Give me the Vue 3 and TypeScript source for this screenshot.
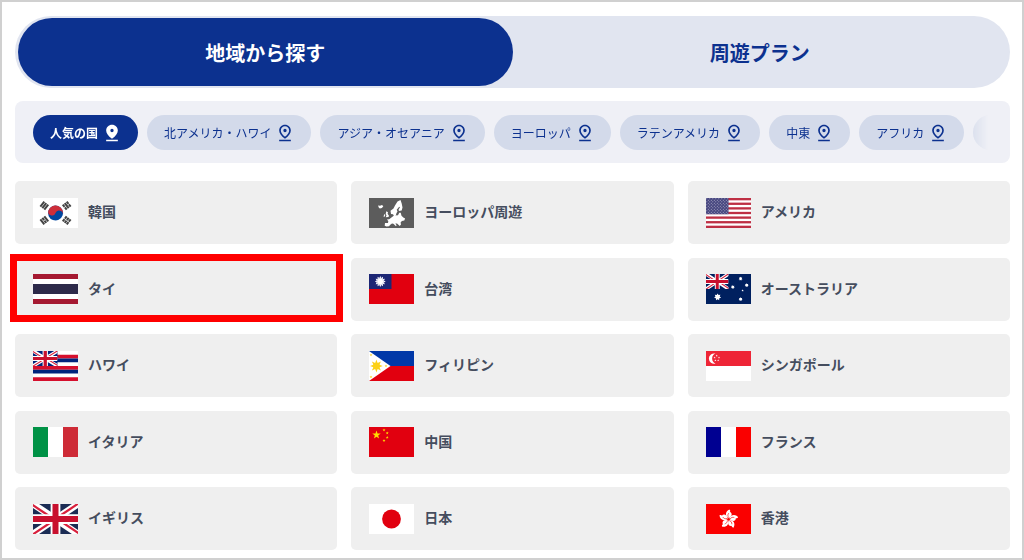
<script setup lang="ts">
import { ref } from 'vue'

interface Country {
  code: string
  name: string
}

const activeTab = ref<number>(0)
const activeRegion = ref<number>(0)
const tabs: string[] = ['地域から探す', '周遊プラン']
const regions: string[] = [
  '人気の国',
  '北アメリカ・ハワイ',
  'アジア・オセアニア',
  'ヨーロッパ',
  'ラテンアメリカ',
  '中東',
  'アフリカ',
]
const highlighted = 'th'

const countries: Country[] = [
  { code: 'kr', name: '韓国' },
  { code: 'eu', name: 'ヨーロッパ周遊' },
  { code: 'us', name: 'アメリカ' },
  { code: 'th', name: 'タイ' },
  { code: 'tw', name: '台湾' },
  { code: 'au', name: 'オーストラリア' },
  { code: 'hawaii', name: 'ハワイ' },
  { code: 'ph', name: 'フィリピン' },
  { code: 'sg', name: 'シンガポール' },
  { code: 'it', name: 'イタリア' },
  { code: 'cn', name: '中国' },
  { code: 'fr', name: 'フランス' },
  { code: 'gb', name: 'イギリス' },
  { code: 'jp', name: '日本' },
  { code: 'hk', name: '香港' },
]

function star(cx: number, cy: number, r: number, points = 5, inner = 0.4): string {
  const out: string[] = []
  for (let i = 0; i < points * 2; i++) {
    const radius = i % 2 === 0 ? r : r * inner
    const a = (Math.PI * i) / points - Math.PI / 2
    out.push(`${(cx + radius * Math.cos(a)).toFixed(2)},${(cy + radius * Math.sin(a)).toFixed(2)}`)
  }
  return out.join(' ')
}
</script>

<template>
  <svg class="defs" width="0" height="0" aria-hidden="true">
    <defs>
      <symbol id="union" viewBox="0 0 60 40" preserveAspectRatio="none">
        <path d="M0 0L60 40M60 0L0 40" stroke="#fff" stroke-width="9" />
        <path d="M-1 1L29 21M31 19L61 39M61 -1L31 19M29 21L-1 41" stroke="#d8203c" stroke-width="3" />
        <path d="M30 0V40M0 20H60" stroke="#fff" stroke-width="13" />
        <path d="M30 0V40M0 20H60" stroke="#c8102e" stroke-width="8" />
      </symbol>
      <pattern id="us-stars" width="3" height="3" patternUnits="userSpaceOnUse">
        <circle cx=".8" cy=".8" r=".5" fill="#b9b7d0" />
        <circle cx="2.3" cy="2.3" r=".5" fill="#b9b7d0" />
      </pattern>
    </defs>
  </svg>

  <main class="page">
    <div class="tabs" role="tablist">
      <button
        v-for="(tab, i) in tabs"
        :key="tab"
        type="button"
        role="tab"
        class="tab"
        :class="{ active: activeTab === i }"
        :aria-selected="activeTab === i"
        @click="activeTab = i"
      >{{ tab }}</button>
    </div>

    <nav class="regions">
      <div class="strip">
        <button
          v-for="(region, i) in regions"
          :key="region"
          type="button"
          class="chip"
          :class="{ active: activeRegion === i }"
          @click="activeRegion = i"
        >
          <span>{{ region }}</span>
          <svg class="pin" viewBox="0 0 24 24" aria-hidden="true">
            <path
              v-if="activeRegion === i"
              fill="currentColor"
              fill-rule="evenodd"
              d="M12 2C8.1 2 5 5 5 9c0 3.2 2.3 6.6 7 10 4.7-3.4 7-6.8 7-10 0-4-3.1-7-7-7zm0 5a2 2 0 1 1 0 4 2 2 0 0 1 0-4zM5 20h14v2H5z"
            />
            <path
              v-else
              fill="currentColor"
              fill-rule="evenodd"
              d="M12 2C8.1 2 5 5 5 9c0 3.2 2.3 6.6 7 10 4.7-3.4 7-6.8 7-10 0-4-3.1-7-7-7zm0 2c2.8 0 5 2.2 5 5 0 2.4-1.7 4.9-5 7.5C8.7 13.9 7 11.4 7 9c0-2.8 2.2-5 5-5zm0 3a2 2 0 1 1 0 4 2 2 0 0 1 0-4zM5 20h14v2H5z"
            />
          </svg>
        </button>
        <span class="chip more" aria-hidden="true"></span>
      </div>
    </nav>

    <div class="grid">
      <a
        v-for="c in countries"
        :key="c.code"
        href="#"
        class="card"
        :class="{ highlight: c.code === highlighted }"
        @click.prevent
      >
        <svg class="flag" viewBox="0 0 45 30" aria-hidden="true">
          <g v-if="c.code === 'kr'">
            <path fill="#fff" d="M0 0h45v30H0z" />
            <g transform="rotate(20 22.5 15)">
              <circle cx="22.5" cy="15" r="7.5" fill="#0047a0" />
              <path fill="#cd2e3a" d="M15 15a7.500 7.500 0 0 1 15 0 3.750 3.750 0 0 0-7.500 0 3.750 3.750 0 0 1-7.500 0z" />
            </g>
            <g stroke="#444" stroke-width="2">
              <path transform="translate(11.3 7.6) rotate(-52)" d="M-3.200-2.500h6.400M-3.200 0h6.400M-3.200 2.500h6.400" />
              <path transform="translate(33.7 7.6) rotate(52)" d="M-3.200-2.500h2.900M.3-2.500h2.900M-3.200 0h6.400M-3.200 2.500h2.900M.3 2.500h2.900" />
              <path transform="translate(11.3 22.4) rotate(52)" d="M-3.200-2.500h6.400M-3.200 0h2.900M.3 0h2.900M-3.200 2.500h6.400" />
              <path transform="translate(33.7 22.4) rotate(-52)" d="M-3.200-2.500h2.900M.3-2.500h2.900M-3.200 0h2.900M.3 0h2.900M-3.200 2.500h2.900M.3 2.500h2.900" />
            </g>
          </g>
          <g v-else-if="c.code === 'eu'">
            <path fill="#5c5c5c" d="M0 0h45v30H0z" />
            <g fill="#fff">
              <path d="M9 7.500l2 .3 2-.7 1.300 1.200-1.400 1.700-2 .5-1-.8z" />
              <path d="M31.500 2l-3 1.400-2.500 4-1.500 3-3 2.300.5 3.200 2 .3 1.200 2 1.600-.6.7-2.600 1-1.500-.8-1.700 2.500-3 .8.500-1.400 2.200.3 1.500 2.800-.4.800-3-.8-4z" />
              <path d="M17.300 13.300l1.700 1-.4 1.500 1.500 2.200-.8 1-2.500.2.700-2-.8-1.200zM15.200 16.200l1 .4-.2 1.900-1.500.3z" />
              <path d="M25 17.500l4-.3 1.200-2.500 1.500.1.800 3 1.800 1.700 1.800 1-.8 2-2.400.5-1.300 1.400.4 2-1.300 1.500-1.300-1.200-1.400-1.300-1.700.2 1.300 1.700-.6 1-2.600-2.500-1.400-.4-1.700 1.300-1.300 1.500-2.500.3-1.800-.8.300-2.600 3-.2.300-2-1.400-1.400 2.300-.3z" />
            </g>
          </g>
          <g v-else-if="c.code === 'us'">
            <path fill="#fff" d="M0 0h45v30H0z" />
            <rect v-for="i in 7" :key="i" width="45" :height="30 / 13" :y="((i - 1) * 60) / 13" fill="#be2f44" />
            <path fill="#46467f" d="M0 0h22.500v16.200H0z" />
            <path fill="url(#us-stars)" d="M0 0h22.500v16.200H0z" />
          </g>
          <g v-else-if="c.code === 'th'">
            <path fill="#a51931" d="M0 0h45v30H0z" />
            <path fill="#fff" d="M0 5h45v20H0z" />
            <path fill="#2d2a4a" d="M0 10h45v10H0z" />
          </g>
          <g v-else-if="c.code === 'tw'">
            <path fill="#e1000f" d="M0 0h45v30H0z" />
            <path fill="#1c2674" d="M0 0h22.500v15H0z" />
            <polygon :points="star(11.3, 7.5, 5.4, 12, 0.68)" fill="#fff" />
            <circle cx="11.3" cy="7.5" r="3.3" fill="none" stroke="#a8add0" stroke-width=".5" />
          </g>
          <g v-else-if="c.code === 'au'">
            <path fill="#00205f" d="M0 0h45v30H0z" />
            <use href="#union" width="22.5" height="15" />
            <g fill="#fff">
              <polygon :points="star(11.6, 23, 3.6, 7, 0.6)" />
              <polygon :points="star(34.6, 4.7, 2, 7, 0.6)" />
              <polygon :points="star(40.7, 11.2, 2, 7, 0.6)" />
              <polygon :points="star(26.8, 13, 2, 7, 0.6)" />
              <polygon :points="star(36.6, 16.5, 1.2)" />
              <polygon :points="star(34.6, 25.2, 2, 7, 0.6)" />
            </g>
          </g>
          <g v-else-if="c.code === 'hawaii'">
            <path fill="#fff" d="M0 0h45v30H0z" />
            <path fill="#d50f2d" d="M0 3.750h45V7.500H0zM0 15h45v3.750H0zM0 26.250h45V30H0z" />
            <path fill="#00247d" d="M0 7.500h45v3.750H0zM0 18.750h45v3.750H0zM0 0h24.500v15H0z" />
            <use href="#union" width="24.5" height="15" />
          </g>
          <g v-else-if="c.code === 'ph'">
            <path fill="#0038a8" d="M0 0h45v15H0z" />
            <path fill="#e1000f" d="M0 15h45v15H0z" />
            <path fill="#fff" d="M0 0l21.500 15L0 30z" />
            <g fill="#fcd116">
              <polygon :points="star(7.4, 15, 6.4, 8, 0.5)" />
              <circle cx="7.4" cy="15" r="3.3" />
              <polygon :points="star(2, 4, 1.5)" />
              <polygon :points="star(2, 26, 1.5)" />
              <polygon :points="star(17, 15, 1.5)" />
            </g>
          </g>
          <g v-else-if="c.code === 'sg'">
            <path fill="#fff" d="M0 0h45v30H0z" />
            <path fill="#ee2536" d="M0 0h45v15H0z" />
            <path fill="#fff" d="M9.500 2.600a5.200 5.200 0 1 0 0 10 5.400 5.400 0 0 1 0-10z" />
            <g fill="#fff">
              <polygon :points="star(10.7, 4.7, 1.1)" />
              <polygon :points="star(8.6, 6.5, 1.1)" />
              <polygon :points="star(13, 6.5, 1.1)" />
              <polygon :points="star(9.4, 9.4, 1.1)" />
              <polygon :points="star(12.2, 9.4, 1.1)" />
            </g>
          </g>
          <g v-else-if="c.code === 'it'">
            <path fill="#fff" d="M0 0h45v30H0z" />
            <path fill="#009246" d="M0 0h15v30H0z" />
            <path fill="#ce2b37" d="M30 0h15v30H30z" />
          </g>
          <g v-else-if="c.code === 'cn'">
            <path fill="#e1000f" d="M0 0h45v30H0z" />
            <g fill="#ffde00">
              <polygon :points="star(7.5, 7.9, 4.4)" />
              <polygon :points="star(15, 3, 1.6)" />
              <polygon :points="star(18.2, 6, 1.6)" />
              <polygon :points="star(18.2, 10.4, 1.6)" />
              <polygon :points="star(15, 13.5, 1.6)" />
            </g>
          </g>
          <g v-else-if="c.code === 'fr'">
            <path fill="#fff" d="M0 0h45v30H0z" />
            <path fill="#000091" d="M0 0h15v30H0z" />
            <path fill="#fa0000" d="M30 0h15v30H30z" />
          </g>
          <g v-else-if="c.code === 'gb'">
            <path fill="#1b2c54" d="M0 0h45v30H0z" />
            <use href="#union" width="45" height="30" />
          </g>
          <g v-else-if="c.code === 'jp'">
            <path fill="#fff" d="M0 0h45v30H0z" />
            <circle cx="22.5" cy="15" r="9.4" fill="#e1000f" />
          </g>
          <g v-else>
            <path fill="#fa0000" d="M0 0h45v30H0z" />
            <g v-for="i in 5" :key="i" :transform="`translate(22.5 15.2) rotate(${i * 72 + 10})`">
              <path fill="#fff" d="M0-1C-4.400-2.500-4.600-7.500-.8-9.800c1.400.8 1.200 1.800.8 2.400C2.600-7.300 3.600-3.500 0-1z" />
              <path fill="none" stroke="#fa0000" stroke-width=".6" d="M0-1.500C-1.500-3-1.600-4.500-.8-6" />
            </g>
          </g>
        </svg>
        <span class="name">{{ c.name }}</span>
      </a>
    </div>
  </main>
</template>

<style>
body {
  background: #fff;
}
</style>

<style scoped>
.defs {
  position: absolute;
}
.page {
  box-sizing: border-box;
  min-height: 100vh;
  display: flex;
  flex-direction: column;
  padding: 14px 12px 8px 13px;
  border: 2px solid #d0d0d0;
  background: #fff;
  font-family: "Noto Sans CJK JP", "Noto Sans", sans-serif;
}
button {
  margin: 0;
  border: 0;
  font-family: inherit;
  cursor: pointer;
}
.tabs {
  display: grid;
  grid-template-columns: 1fr 1fr;
  padding: 2px 3px;
  border-radius: 36px;
  background: #e1e5f0;
}
.tab {
  height: 68px;
  padding: 0;
  border-radius: 34px;
  background: transparent;
  color: #0c318f;
  font-size: 20px;
  font-weight: 700;
}
.tab.active {
  background: #0c318f;
  color: #fff;
}
.regions {
  margin-top: 13px;
  padding: 14px 18px 13px;
  border-radius: 8px;
  background: #eff0f6;
}
.strip {
  display: flex;
  gap: 9px;
  overflow: hidden;
  mask-image: linear-gradient(to left, transparent 4px, #000 26px);
}
.chip {
  display: flex;
  flex: none;
  align-items: center;
  gap: 4px;
  height: 35px;
  padding: 0 16px 0 17px;
  border-radius: 18px;
  background: #d3daea;
  color: #0c318f;
  font-size: 12px;
  line-height: 18px;
}
.chip.active {
  background: #0c318f;
  color: #fff;
  font-weight: 700;
}
.more {
  width: 48px;
}
.pin {
  width: 20px;
  height: 20px;
}
.grid {
  flex: 1;
  display: grid;
  grid-template-columns: repeat(3, 1fr);
  grid-auto-rows: 63px;
  align-content: space-between;
  column-gap: 14px;
  row-gap: 13px;
  margin-top: 18px;
}
.card {
  position: relative;
  display: flex;
  align-items: center;
  gap: 10px;
  padding: 0 18px;
  border-radius: 5px;
  background: #efefef;
  color: #454d5e;
  font-size: 14px;
  font-weight: 700;
  line-height: 20px;
  text-decoration: none;
}
.name {
  padding-bottom: 3px;
}
.flag {
  flex: none;
  width: 45px;
  height: 30px;
}
.highlight::after {
  content: "";
  position: absolute;
  inset: -4px -6px -1px -5px;
  border: 7px solid #f00;
}
</style>
